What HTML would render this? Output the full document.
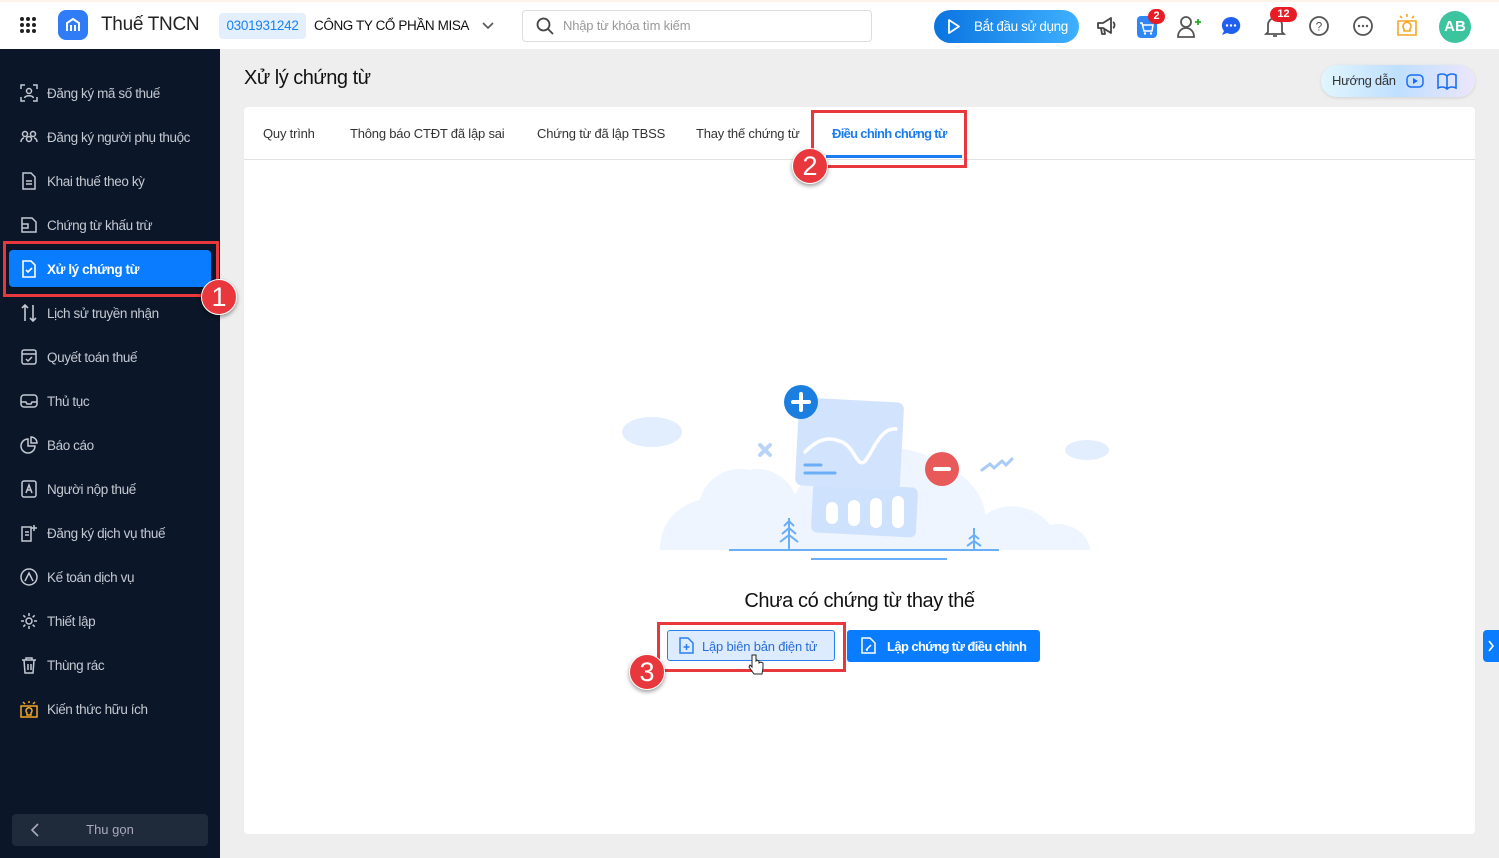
<!DOCTYPE html>
<html><head><meta charset="utf-8"><style>
*{box-sizing:border-box;margin:0;padding:0}
body{width:1499px;height:858px;overflow:hidden;font-family:"Liberation Sans","Noto Sans CJK SC",sans-serif;background:#eeeeee;position:relative;color:#222}
.top{position:absolute;left:0;top:0;width:1499px;height:49px;background:#fff;border-top:2px solid #fdf3ea}
.side{position:absolute;left:0;top:49px;width:220px;height:809px;background:#0b1628}
.it{position:absolute;left:20px;height:22px;display:flex;align-items:center;color:#c4c9d2;font-size:13.5px;letter-spacing:-0.4px}
.it svg{width:18px;height:18px;margin-right:9px}
.badge{position:absolute;width:36px;height:36px;border-radius:50%;background:#e8383d;color:#fff;font-size:27px;display:flex;align-items:center;justify-content:center;box-shadow:0 2px 4px rgba(0,0,0,.4);border:1px solid #fff}
.redbox{position:absolute;border:3px solid #e8383d}
.ic{position:absolute;top:13px}
.tab{position:absolute;top:126px;font-size:13px;color:#333;letter-spacing:-0.2px}
</style></head><body>
<div class="top">
 <svg style="position:absolute;left:19px;top:14px" width="18" height="18"><g fill="#222"><circle cx="3" cy="3" r="2"/><circle cx="9" cy="3" r="2"/><circle cx="15" cy="3" r="2"/><circle cx="3" cy="9" r="2"/><circle cx="9" cy="9" r="2"/><circle cx="15" cy="9" r="2"/><circle cx="3" cy="15" r="2"/><circle cx="9" cy="15" r="2"/><circle cx="15" cy="15" r="2"/></g></svg>
 <div style="position:absolute;left:58px;top:8px;width:30px;height:30px;border-radius:8px;background:#2f7cf6;display:flex;align-items:center;justify-content:center"><svg width="16" height="16"><path d="M2 14V6l6-4 6 4v8M6 14V8M10 14V8" stroke="#fff" stroke-width="2" fill="none"/></svg></div>
 <div style="position:absolute;left:101px;top:12px;font-size:19px;color:#222;letter-spacing:-0.3px">Thuế TNCN</div>
 <div style="position:absolute;left:219px;top:11px;width:87px;height:26px;background:#e3effc;border-radius:4px;color:#1a82f0;font-size:13.5px;line-height:26px;text-align:center;letter-spacing:-0.3px">0301931242</div>
 <div style="position:absolute;left:314px;top:16px;font-size:13.5px;color:#111;letter-spacing:-0.4px">CÔNG TY CỔ PHẦN MISA</div>
 <svg style="position:absolute;left:482px;top:20px" width="12" height="8"><path d="M1 1l5 5 5-5" stroke="#555" stroke-width="1.6" fill="none"/></svg>
 <div style="position:absolute;left:522px;top:8px;width:350px;height:32px;border:1px solid #ddd;border-radius:4px"></div>
 <svg style="position:absolute;left:536px;top:15px" width="18" height="18"><circle cx="7.5" cy="7.5" r="6" stroke="#444" stroke-width="1.8" fill="none"/><path d="M12 12l5 5" stroke="#444" stroke-width="1.8"/></svg>
 <div style="position:absolute;left:563px;top:16px;font-size:13px;color:#999;letter-spacing:-0.2px">Nhập từ khóa tìm kiếm</div>
 <div style="position:absolute;left:934px;top:8px;width:145px;height:33px;border-radius:17px;background:linear-gradient(90deg,#0a74e0,#3fb0ff);color:#fff;font-size:13.5px;line-height:33px;padding-left:40px;letter-spacing:-0.4px">Bắt đầu sử dụng</div>
 <svg style="position:absolute;left:947px;top:16px" width="14" height="17"><path d="M2 2l10 6.5L2 15z" stroke="#fff" stroke-width="1.8" fill="none" stroke-linejoin="round"/></svg>
 <svg class="ic" style="left:1096px;top:14px" width="22" height="22"><path d="M2 7h5l8-5v15l-8-5H2z M5 12l1 6h3l-1-6 M17 6c2 1 2 5 0 6" stroke="#444" stroke-width="1.8" fill="none" stroke-linejoin="round"/></svg>
 <div style="position:absolute;left:1137px;top:14px;width:20px;height:22px;border-radius:4px;background:#2f86f5"></div>
 <svg style="position:absolute;left:1139px;top:19px" width="16" height="15"><path d="M1 2h2l2 8h8l1-6H4" stroke="#fff" stroke-width="1.5" fill="none"/><circle cx="6" cy="12.5" r="1.2" fill="#fff"/><circle cx="12" cy="12.5" r="1.2" fill="#fff"/></svg>
 <div style="position:absolute;left:1148px;top:7px;width:17px;height:15px;border-radius:8px;background:#e81c24;color:#fff;font-size:11px;font-weight:bold;text-align:center;line-height:15px">2</div>
 <svg class="ic" style="left:1176px" width="26" height="24"><circle cx="10" cy="7" r="5" stroke="#555" stroke-width="1.8" fill="none"/><path d="M2 22c0-6 4-9 8-9s8 3 8 9z" stroke="#555" stroke-width="1.8" fill="none"/><path d="M19 7h6M22 4v6" stroke="#2a2" stroke-width="1.8"/></svg>
 <svg class="ic" style="left:1220px" width="22" height="22"><path d="M11 2a9 8.5 0 1 1-4 16l-5 2 2-4A9 8.5 0 0 1 11 2z" fill="#2060f0"/><g fill="#fff"><circle cx="7" cy="10.5" r="1.2"/><circle cx="11" cy="10.5" r="1.2"/><circle cx="15" cy="10.5" r="1.2"/></g></svg>
 <svg class="ic" style="left:1264px" width="22" height="24"><path d="M4 17V10a7 7 0 0 1 14 0v7l2 2H2z M9 21h4" stroke="#555" stroke-width="1.8" fill="none"/></svg>
 <div style="position:absolute;left:1270px;top:5px;width:27px;height:15px;border-radius:8px;background:#e81c24;color:#fff;font-size:11px;font-weight:bold;text-align:center;line-height:15px">12</div>
 <svg class="ic" style="left:1308px" width="22" height="22"><circle cx="11" cy="11" r="9" stroke="#555" stroke-width="1.8" fill="none"/><text x="11" y="15.5" font-size="12" text-anchor="middle" fill="#555" font-family="Liberation Sans">?</text></svg>
 <svg class="ic" style="left:1352px" width="22" height="22"><circle cx="11" cy="11" r="9" stroke="#555" stroke-width="1.8" fill="none"/><g fill="#555"><circle cx="7" cy="11" r="1.2"/><circle cx="11" cy="11" r="1.2"/><circle cx="15" cy="11" r="1.2"/></g></svg>
 <svg class="ic" style="left:1396px;top:11px" width="22" height="24"><path d="M2 8h18v14H2z M8 16a4 4 0 1 1 6 0v2H8z M11 1v3M4 3l2 2M18 3l-2 2" stroke="#f5a623" stroke-width="1.6" fill="none"/></svg>
 <div style="position:absolute;left:1439px;top:9px;width:32px;height:32px;border-radius:50%;background:#3cc49f;color:#fff;font-weight:bold;font-size:15px;line-height:32px;text-align:center">AB</div>
</div>
<div class="side">
 <div class="it" style="top:33px"><svg viewBox="0 0 18 18" fill="none" stroke="#c4c9d2" stroke-width="1.5"><path d="M1 5V1h4M13 1h4v4M17 13v4h-4M5 17H1v-4"/><circle cx="9" cy="7" r="2.5"/><path d="M4.5 14c1-3 8-3 9 0"/></svg>Đăng ký mã số thuế</div>
 <div class="it" style="top:77px"><svg viewBox="0 0 18 18" fill="none" stroke="#c4c9d2" stroke-width="1.5"><circle cx="5" cy="6" r="2.5"/><circle cx="13" cy="6" r="2.5"/><circle cx="9" cy="11" r="2.5"/><path d="M1 14c0-3 2-4 3-4M17 14c0-3-2-4-3-4"/></svg>Đăng ký người phụ thuộc</div>
 <div class="it" style="top:121px"><svg viewBox="0 0 18 18" fill="none" stroke="#c4c9d2" stroke-width="1.5"><path d="M3 1h8l4 4v12H3z M6 9h6M6 12h6"/></svg>Khai thuế theo kỳ</div>
 <div class="it" style="top:165px"><svg viewBox="0 0 18 18" fill="none" stroke="#c4c9d2" stroke-width="1.5"><path d="M2 2h10l4 4v10H2z M2 8h6v4H2"/></svg>Chứng từ khấu trừ</div>
 <div style="position:absolute;left:9px;top:201px;width:202px;height:37px;background:#0a7cff;border-radius:4px"></div>
 <div class="it" style="top:209px;color:#fff;font-weight:bold"><svg viewBox="0 0 18 18" fill="none" stroke="#fff" stroke-width="1.6"><path d="M3 1h8l4 4v12H3z M6 10l2 2 4-4"/></svg>Xử lý chứng từ</div>
 <div class="it" style="top:253px"><svg viewBox="0 0 18 18" fill="none" stroke="#c4c9d2" stroke-width="1.6"><path d="M5 17V1M2 4l3-3 3 3M13 1v16M10 14l3 3 3-3"/></svg>Lịch sử truyền nhận</div>
 <div class="it" style="top:297px"><svg viewBox="0 0 18 18" fill="none" stroke="#c4c9d2" stroke-width="1.5"><rect x="2" y="2" width="14" height="14" rx="2"/><path d="M2 6h14M6 11l2 2 4-4"/></svg>Quyết toán thuế</div>
 <div class="it" style="top:341px"><svg viewBox="0 0 18 18" fill="none" stroke="#c4c9d2" stroke-width="1.5"><rect x="1" y="3" width="16" height="12" rx="3"/><path d="M1 10h5l1 2h4l1-2h5"/></svg>Thủ tục</div>
 <div class="it" style="top:385px"><svg viewBox="0 0 18 18" fill="none" stroke="#c4c9d2" stroke-width="1.5"><path d="M8 3a7 7 0 1 0 7 7H8z M11 1a6 6 0 0 1 6 6h-6z"/></svg>Báo cáo</div>
 <div class="it" style="top:429px"><svg viewBox="0 0 18 18" fill="none" stroke="#c4c9d2" stroke-width="1.5"><rect x="2" y="1" width="14" height="16" rx="2"/><path d="M6 13l3-8 3 8M7 10h4"/></svg>Người nộp thuế</div>
 <div class="it" style="top:473px"><svg viewBox="0 0 18 18" fill="none" stroke="#c4c9d2" stroke-width="1.5"><path d="M2 3h9v14H2z M5 8h4M5 11h4M14 1v6M11 4h6"/></svg>Đăng ký dịch vụ thuế</div>
 <div class="it" style="top:517px"><svg viewBox="0 0 18 18" fill="none" stroke="#c4c9d2" stroke-width="1.5"><circle cx="9" cy="9" r="8"/><path d="M5 13l4-8 4 8"/></svg>Kế toán dịch vụ</div>
 <div class="it" style="top:561px"><svg viewBox="0 0 18 18" fill="none" stroke="#c4c9d2" stroke-width="1.5"><circle cx="9" cy="9" r="3"/><path d="M9 1v3M9 14v3M1 9h3M14 9h3M3.3 3.3l2 2M12.7 12.7l2 2M3.3 14.7l2-2M12.7 5.3l2-2"/></svg>Thiết lập</div>
 <div class="it" style="top:605px"><svg viewBox="0 0 18 18" fill="none" stroke="#c4c9d2" stroke-width="1.5"><path d="M2 4h14M6 4V2h6v2M4 4l1 13h8l1-13M8 8v6M11 8v6"/></svg>Thùng rác</div>
 <div class="it" style="top:649px"><svg viewBox="0 0 18 18" fill="none" stroke="#f5a623" stroke-width="1.5"><path d="M1 6h16v11H1z M7 13a3 3 0 1 1 4 0v2H7z M9 1v2M3 2l2 2M15 2l-2 2"/></svg>Kiến thức hữu ích</div>
 <div style="position:absolute;left:12px;top:765px;width:196px;height:32px;background:#1f2a3a;border-radius:4px;color:#aab;font-size:13px;line-height:32px;text-align:center">Thu gọn</div>
 <svg style="position:absolute;left:30px;top:774px" width="10" height="14"><path d="M8 1L2 7l6 6" stroke="#aab" stroke-width="1.6" fill="none"/></svg>
</div>
<div class="redbox" style="left:3px;top:241px;width:216px;height:56px"></div>
<div class="badge" style="left:201px;top:279px">1</div>

<div style="position:absolute;left:244px;top:67px;font-size:20px;color:#111;letter-spacing:-0.5px">Xử lý chứng từ</div>
<div style="position:absolute;left:1321px;top:65px;width:154px;height:32px;border-radius:16px;background:linear-gradient(90deg,#e1f6fd,#bfdfff,#ece6fb);box-shadow:0 1px 3px rgba(0,0,0,.12)"></div>
<div style="position:absolute;left:1332px;top:73px;font-size:13px;color:#333;letter-spacing:-0.3px">Hướng dẫn</div>
<svg style="position:absolute;left:1406px;top:73px" width="18" height="16"><rect x="1" y="2" width="16" height="12" rx="4" stroke="#1a6ef0" stroke-width="1.5" fill="none"/><path d="M7 5l5 3-5 3z" fill="#1a6ef0"/></svg>
<svg style="position:absolute;left:1437px;top:72px" width="20" height="18"><path d="M10 4C7 1 3 2 1 3v13c2-1 6-2 9 1 3-3 7-2 9-1V3c-2-1-6-2-9 1zM10 4v13" stroke="#1a6ef0" stroke-width="1.6" fill="none"/></svg>

<div style="position:absolute;left:244px;top:107px;width:1231px;height:727px;background:#fff;border-radius:4px"></div>
<div style="position:absolute;left:244px;top:159px;width:1231px;height:1px;background:#e2e2e2"></div>
<div class="tab" style="left:263px">Quy trình</div>
<div class="tab" style="left:350px">Thông báo CTĐT đã lập sai</div>
<div class="tab" style="left:537px">Chứng từ đã lập TBSS</div>
<div class="tab" style="left:696px">Thay thế chứng từ</div>
<div class="tab" style="left:832px;color:#1a7cf0;font-weight:bold;letter-spacing:-0.7px">Điều chỉnh chứng từ</div>
<div style="position:absolute;left:826px;top:155px;width:136px;height:3px;background:#1a7cf0"></div>
<div class="redbox" style="left:811px;top:110px;width:156px;height:58px"></div>
<div class="badge" style="left:792px;top:148px">2</div>

<svg style="position:absolute;left:600px;top:370px" width="520" height="200" viewBox="0 0 520 200">
 <g fill="#eef5fe"><path d="M60 180c0-30 20-45 40-50 5-20 25-35 50-30 20-5 40 10 45 25 20-40 80-60 130-40 40 15 60 40 60 60 20-15 50-10 65 10 20-5 40 10 40 25z"/></g>
 <g fill="#e2eefd"><ellipse cx="52" cy="62" rx="30" ry="15"/><ellipse cx="487" cy="80" rx="22" ry="10"/></g>
 <path d="M160 75l10 10M170 75l-10 10" stroke="#b8d4f8" stroke-width="4" stroke-linecap="round"/>
 <path d="M382 100l8-6 4 4 8-7 4 4 6-6" stroke="#a8ccf8" stroke-width="3" fill="none" stroke-linecap="round"/>
 <rect x="212" y="115" width="105" height="50" rx="6" fill="#cfe2fd" transform="rotate(3 265 140)"/>
 <g fill="#fff"><rect x="226" y="132" width="12" height="22" rx="6"/><rect x="248" y="130" width="12" height="26" rx="6"/><rect x="270" y="128" width="12" height="30" rx="6"/><rect x="292" y="126" width="12" height="32" rx="6"/></g>
 <rect x="197" y="30" width="105" height="88" rx="7" fill="#d2e4fd" transform="rotate(3 250 74)" />
 <path d="M205 82c15-15 25-15 37-10s15 25 22 20 15-35 32-33" stroke="#fff" stroke-width="3.5" fill="none" stroke-linecap="round"/>
 <path d="M205 95h16M205 103h30" stroke="#6aaef8" stroke-width="3" stroke-linecap="round"/>
 <circle cx="201" cy="32" r="17" fill="#1a7fe0"/><path d="M201 24v16M193 32h16" stroke="#fff" stroke-width="4" stroke-linecap="round"/>
 <circle cx="342" cy="99" r="17" fill="#e85a5a"/><path d="M335 99h14" stroke="#fff" stroke-width="4" stroke-linecap="round"/>
 <g stroke="#6aaef8" stroke-width="2" fill="none"><path d="M130 180h269M129 180h17M211 189h136"/><path d="M189 180v-32M180 172l9-7 9 7M182 164l7-6 7 6M184 156l5-5 5 5"/><path d="M374 180v-22M367 176l7-5 7 5M369 169l5-4 5 4"/></g>
</svg>

<div style="position:absolute;left:0;width:1719px;top:590px;text-align:center;font-size:20px;color:#111;letter-spacing:-0.4px">Chưa có chứng từ thay thế</div>
<div style="position:absolute;left:667px;top:630px;width:168px;height:31px;border:1px solid #2a7ff0;border-radius:3px;background:#dcebfd"></div>
<svg style="position:absolute;left:679px;top:637px" width="15" height="17"><path d="M1 1h8l5 5v10H1z M7.5 7v6M4.5 10h6" stroke="#2a7ff0" stroke-width="1.5" fill="none"/></svg>
<div style="position:absolute;left:702px;top:639px;font-size:13px;color:#2a6ed8;letter-spacing:-0.2px">Lập biên bản điện tử</div>
<div style="position:absolute;left:847px;top:630px;width:193px;height:32px;border-radius:3px;background:#0a7cff"></div>
<svg style="position:absolute;left:861px;top:637px" width="15" height="17"><path d="M1 1h8l5 5v10H1z M5 13l5-5M5 13h2" stroke="#fff" stroke-width="1.5" fill="none"/></svg>
<div style="position:absolute;left:887px;top:639px;font-size:13px;color:#fff;font-weight:bold;letter-spacing:-0.6px">Lập chứng từ điều chỉnh</div>
<div class="redbox" style="left:657px;top:622px;width:189px;height:50px"></div>
<div class="badge" style="left:629px;top:654px">3</div>
<svg style="position:absolute;left:748px;top:654px" width="16" height="22"><path d="M4 1v12l-2-2-1 2 5 7h8l1-6V9l-2-1-2 1V7l-2-1-1 1V1z" fill="#fff" stroke="#222" stroke-width="1"/></svg>
<div style="position:absolute;left:1483px;top:630px;width:16px;height:32px;background:#0a7cff;border-radius:4px 0 0 4px"></div>
<svg style="position:absolute;left:1487px;top:640px" width="8" height="12"><path d="M2 1l4 5-4 5" stroke="#fff" stroke-width="1.6" fill="none"/></svg>
</body></html>
